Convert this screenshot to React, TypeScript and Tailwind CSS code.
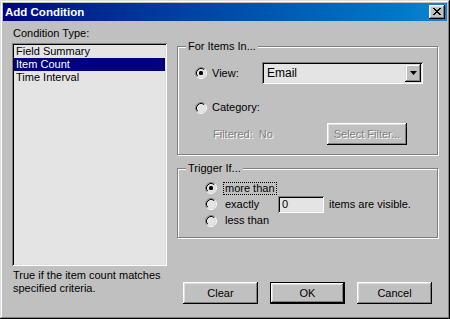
import type { ReactNode } from 'react';

const font = "font-['Liberation_Sans',Arial,sans-serif]";

function Radio({ checked }: { checked?: boolean }) {
  return (
    <svg width="12" height="12" viewBox="0 0 12 12" className="shrink-0">
      <circle cx="6" cy="6" r="4.5" fill="#e4e4e4" />
      <path d="M2.11 9.89 A5.5 5.5 0 0 1 9.89 2.11" fill="none" stroke="#808080" strokeWidth="1" />
      <path d="M9.89 2.11 A5.5 5.5 0 0 1 2.11 9.89" fill="none" stroke="#ffffff" strokeWidth="1" />
      <path d="M2.82 9.18 A4.5 4.5 0 0 1 9.18 2.82" fill="none" stroke="#000000" strokeWidth="1" />
      <path d="M9.18 2.82 A4.5 4.5 0 0 1 2.82 9.18" fill="none" stroke="#dfdfdf" strokeWidth="1" />
      {checked && <rect x="4" y="4" width="4" height="4" rx="1.5" fill="#000" />}
    </svg>
  );
}

function Button({ children, isDefault, disabled, className = '' }: { children: ReactNode; isDefault?: boolean; disabled?: boolean; className?: string }) {
  const face = (
    <div
      className={`flex-1 flex items-center justify-center bg-[#c0c0c0] shadow-[inset_-1px_-1px_0_#000,inset_1px_1px_0_#fff,inset_-2px_-2px_0_#808080,inset_2px_2px_0_#dfdfdf] ${
        disabled ? 'text-[#808080] [text-shadow:1px_1px_0_#fff]' : 'text-black'
      }`}
    >
      {children}
    </div>
  );
  if (isDefault) {
    return <div className={`flex border border-black ${className}`}>{face}</div>;
  }
  return <div className={`flex ${className}`}>{face}</div>;
}

function GroupBox({ title, className = '', children }: { title: string; className?: string; children: ReactNode }) {
  return (
    <div className={`relative border border-[#808080] shadow-[inset_1px_1px_0_#fff,1px_1px_0_#fff] ${className}`}>
      <span className="absolute left-[8px] top-[-7px] bg-[#c0c0c0] px-[2px] leading-[13px]">{title}</span>
      {children}
    </div>
  );
}

export default function App() {
  return (
    <div className={`${font} text-[11px] leading-[13px] text-black`}>
      <div className="w-[450px] h-[319px] bg-[#c0c0c0] p-[3px] flex flex-col shadow-[inset_-1px_-1px_0_#000,inset_1px_1px_0_#dfdfdf,inset_-2px_-2px_0_#808080,inset_2px_2px_0_#fff]">
        {/* title bar */}
        <div className="h-[18px] flex items-center justify-between pl-[2px] pr-[2px] bg-linear-to-r from-[#000080] to-[#1084d0]">
          <span className="text-white font-bold text-[11.5px] leading-[14px]">Add Condition</span>
          <div className="w-[16px] h-[14px] flex items-center justify-center bg-[#c0c0c0] shadow-[inset_-1px_-1px_0_#000,inset_1px_1px_0_#fff,inset_-2px_-2px_0_#808080,inset_2px_2px_0_#dfdfdf]">
            <svg width="8" height="7" viewBox="0 0 8 7" className="mb-[1px]">
              <path d="M0 0h2v1h1v1h2V1h1V0h2v1H7v1H6v1H5v1h1v1h1v1h1v1H6V6H5V5H3v1H2v1H0V6h1V5h1V4h1V3H2V2H1V1H0z" fill="#000" />
            </svg>
          </div>
        </div>

        {/* body */}
        <div className="flex-1 flex gap-[10px] px-[9px] pt-[6px]">
          {/* left column */}
          <div className="w-[155px] flex flex-col">
            <div className="pl-[1px]">Condition Type:</div>
            <div className="mt-[3px] h-[223px] bg-[#e4e4e4] p-[2px] shadow-[inset_1px_1px_0_#808080,inset_-1px_-1px_0_#fff,inset_2px_2px_0_#000,inset_-2px_-2px_0_#dfdfdf]">
              <div className="pl-[2px] h-[13px]">Field Summary</div>
              <div className="pl-[2px] h-[13px] bg-[#000080] text-white">Item Count</div>
              <div className="pl-[2px] h-[13px]">Time Interval</div>
            </div>
            <div className="mt-[3px] pl-[1px]">
              True if the item count matches
              <br />
              specified criteria.
            </div>
          </div>

          {/* right column */}
          <div className="w-[261px] flex flex-col pt-[19px]">
            <GroupBox title="For Items In..." className="h-[109px] pt-[15px]">
              <div className="flex items-center h-[22px]">
                <div className="w-[84px] flex items-center pl-[17px] gap-[5px]">
                  <Radio checked />
                  <span>View:</span>
                </div>
                <div className="w-[161px] h-[22px] flex items-center bg-[#e4e4e4] p-[2px] shadow-[inset_1px_1px_0_#808080,inset_-1px_-1px_0_#fff,inset_2px_2px_0_#000,inset_-2px_-2px_0_#dfdfdf]">
                  <span className="flex-1 pl-[3px] text-[12px]">Email</span>
                  <div className="w-[16px] h-[18px] flex items-center justify-center bg-[#c0c0c0] shadow-[inset_-1px_-1px_0_#000,inset_1px_1px_0_#dfdfdf,inset_-2px_-2px_0_#808080,inset_2px_2px_0_#fff]">
                    <svg width="7" height="4" viewBox="0 0 7 4">
                      <path d="M0 0h7L3.5 4z" fill="#000" />
                    </svg>
                  </div>
                </div>
              </div>
              <div className="flex items-center pl-[17px] gap-[5px] mt-[17px] h-[13px]">
                <Radio />
                <span>Category:</span>
              </div>
              <div className="flex items-center h-[22px] mt-[9px]">
                <span className="w-[149px] pl-[35px] text-[#808080] [text-shadow:1px_1px_0_#fff]">Filtered:&nbsp; No</span>
                <Button disabled className="w-[80px] h-[22px]">Select Filter...</Button>
              </div>
            </GroupBox>

            <GroupBox title="Trigger If..." className="mt-[13px] h-[70px] pt-[11px]">
              <div className="flex items-center">
                <div className="w-[100px] flex flex-col pl-[27px]">
                  <div className="flex items-center h-[16px] gap-[6px]">
                    <Radio checked />
                    <span className="border border-dotted border-black px-[1px] leading-[11px]">more than</span>
                  </div>
                  <div className="flex items-center h-[16px] gap-[8px]">
                    <Radio />
                    <span>exactly</span>
                  </div>
                  <div className="flex items-center h-[17px] gap-[8px]">
                    <Radio />
                    <span>less than</span>
                  </div>
                </div>
                <div className="w-[46px] h-[17px] flex items-center bg-[#e4e4e4] pl-[4px] shadow-[inset_1px_1px_0_#808080,inset_-1px_-1px_0_#fff,inset_2px_2px_0_#000,inset_-2px_-2px_0_#dfdfdf]">
                  0
                </div>
                <span className="ml-[5px]">items are visible.</span>
              </div>
            </GroupBox>

            <div className="mt-[44px] flex gap-[12px] px-[6px]">
              <Button className="w-[75px] h-[22px]">Clear</Button>
              <Button isDefault className="w-[75px] h-[22px]">OK</Button>
              <Button className="w-[75px] h-[22px]">Cancel</Button>
            </div>
          </div>
        </div>
      </div>
    </div>
  );
}
